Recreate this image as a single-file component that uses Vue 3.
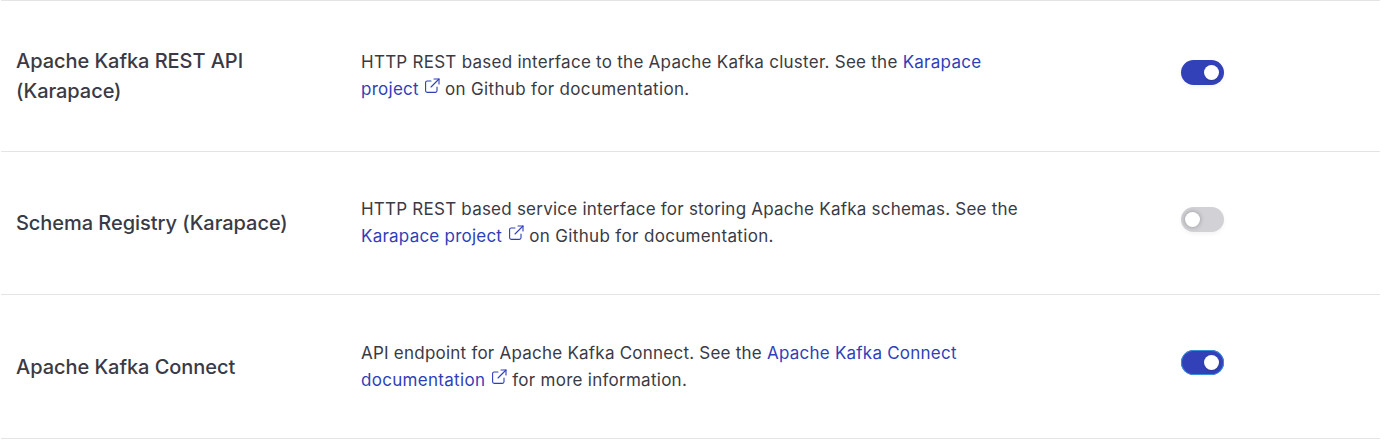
<template>
  <div class="list">
    <div v-for="row in rows" :key="row.name" class="row" :class="row.cls">
      <div class="name" v-html="row.name"></div>
      <div class="desc">
        <span>{{ row.before }}</span>
        <a class="link">{{ row.link1 }}</a>
        <br />
        <a class="link second">{{ row.link2 }}</a>
        <a class="ext">
          <svg width="16" height="16" viewBox="0 0 16 16" fill="none" stroke="currentColor" stroke-width="1.1" stroke-linecap="round" stroke-linejoin="round">
            <path d="M7 3H3.2C2.3 3 1.6 3.7 1.6 4.6v8.2c0 .9.7 1.6 1.6 1.6h8.2c.9 0 1.6-.7 1.6-1.6V9" />
            <path d="M10 1h5v5" />
            <path d="M15 1 7 9" />
          </svg>
        </a>
        <span class="after">{{ row.after }}</span>
      </div>
      <div class="switch" :class="{ on: row.on, focus: row.focus }">
        <span class="knob"></span>
      </div>
    </div>
  </div>
</template>

<script setup>
const rows = [
  {
    cls: 'r1',
    name: 'Apache Kafka REST API<br>(Karapace)',
    before: 'HTTP REST based interface to the Apache Kafka cluster. See the ',
    link1: 'Karapace',
    link2: 'project',
    after: ' on Github for documentation.',
    on: true
  },
  {
    cls: 'r2',
    name: 'Schema Registry (Karapace)',
    before: 'HTTP REST based service interface for storing Apache Kafka schemas. See the',
    link1: '',
    link2: 'Karapace project',
    after: ' on Github for documentation.',
    on: false
  },
  {
    cls: 'r3',
    name: 'Apache Kafka Connect',
    before: 'API endpoint for Apache Kafka Connect. See the ',
    link1: 'Apache Kafka Connect',
    link2: 'documentation',
    after: ' for more information.',
    on: true,
    focus: true
  }
]
</script>

<style>
html,
body {
  background: #fff;
}
</style>

<style scoped>
.list {
  width: 1379px;
  margin-left: 1px;
  border-top: 1px solid #e4e4e7;
  font-family: Inter, "Noto Sans", sans-serif;
}

.row {
  display: grid;
  grid-template-columns: 360px 820px 43px;
  align-items: center;
  border-bottom: 1px solid #e4e4e7;
  color: #3a3a44;
}

.r1 {
  height: 150px;
}

.r2 {
  height: 142px;
}

.r3 {
  height: 143px;
}

.name {
  padding-left: 15px;
  font-size: 20px;
  font-weight: 500;
  line-height: 30px;
  letter-spacing: -0.05px;
}

.desc {
  font-size: 17px;
  line-height: 27px;
  letter-spacing: 0.23px;
}

.r1 .desc {
  letter-spacing: 0.26px;
}

.link {
  color: #2f3fb8;
}

.r3 .second {
  letter-spacing: 0.3px;
}

.after {
  letter-spacing: 0.34px;
}

.r3 .after {
  letter-spacing: 0.27px;
}

.ext {
  display: inline-block;
  margin-left: 6px;
  color: #2f3fb8;
  vertical-align: 1px;
}

.r1 .ext {
  margin-left: 5px;
}

.ext svg {
  display: block;
}

.switch {
  position: relative;
  width: 43px;
  height: 25px;
  margin-bottom: 8px;
  border-radius: 13px;
  background: #d1d1d6;
  box-shadow: 0 2px 4px rgba(0, 0, 0, 0.05);
}

.switch.on {
  background: #3241b8;
}

.switch.focus {
  box-shadow: inset 0 0 0 1px #3a8fd8;
}

.knob {
  position: absolute;
  top: 5px;
  left: 4px;
  width: 15px;
  height: 15px;
  border-radius: 50%;
  background: #fff;
  box-shadow: 0 0 5px rgba(0, 0, 0, 0.3);
}

.switch.on .knob {
  left: 23px;
  box-shadow: 0 1px 2px rgba(0, 0, 0, 0.15);
}
</style>
